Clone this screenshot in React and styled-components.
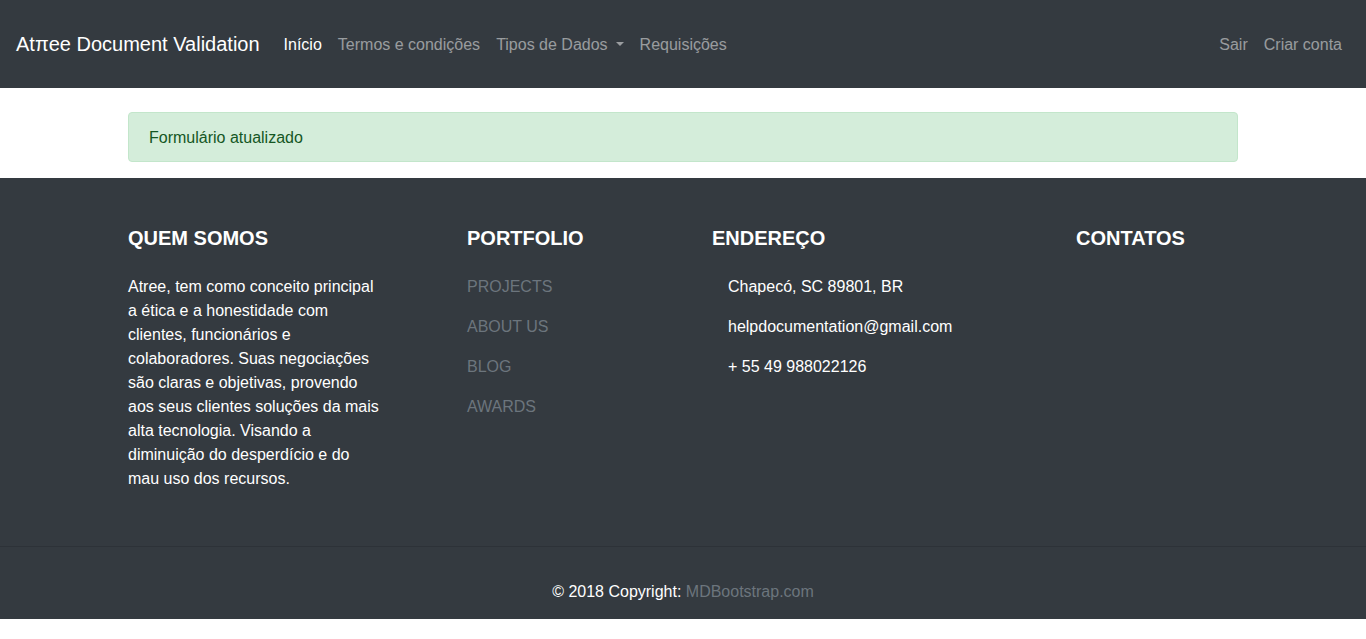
import React from "react";
import styled, { createGlobalStyle } from "styled-components";

const Global = createGlobalStyle`
  * { box-sizing: border-box; }
  body {
    margin: 0;
    background: #fff;
    font-family: "Liberation Sans", Arial, sans-serif;
    font-size: 16px;
    line-height: 1.5;
    color: #212529;
  }
`;

const Navbar = styled.nav`
  display: flex;
  align-items: center;
  height: 88px;
  padding: 0 16px;
  background: #343a40;
`;

const Brand = styled.a`
  font-size: 20px;
  line-height: 30px;
  padding: 5px 0;
  margin-right: 16px;
  color: #fff;
  text-decoration: none;
  white-space: nowrap;
`;

const NavList = styled.ul`
  display: flex;
  list-style: none;
  margin: 0;
  padding: 0;
  margin-left: ${(p) => (p.$right ? "auto" : "0")};
`;

const NavLink = styled.a`
  display: flex;
  align-items: center;
  padding: 9px 8px 7px;
  line-height: 24px;
  color: ${(p) => (p.$active ? "#fff" : "rgba(255,255,255,0.5)")};
  text-decoration: none;
  white-space: nowrap;
`;

const Caret = styled.span`
  display: inline-block;
  margin-left: 8px;
  width: 0;
  height: 0;
  border-top: 4.8px solid currentColor;
  border-left: 4.8px solid transparent;
  border-right: 4.8px solid transparent;
  position: relative;
  top: -1px;
`;

const Main = styled.main`
  width: 1140px;
  margin: 0 auto;
  padding: 24px 15px 16px;
`;

const Alert = styled.div`
  padding: 13px 20px 11px;
  border: 1px solid #c3e6cb;
  border-radius: 4px;
  background: #d4edda;
  color: #155724;
  line-height: 24px;
`;

const Footer = styled.footer`
  background: #343a40;
  color: #fff;
`;

const FooterGrid = styled.div`
  width: 1140px;
  margin: 0 auto;
  padding: 48px 15px 55px;
  display: grid;
  grid-template-columns: 339px 245px 364px 1fr;
`;

const Column = styled.div``;

const Heading = styled.h5`
  margin: 0 0 25px;
  font-size: 20px;
  font-weight: 700;
  line-height: 24px;
  text-transform: uppercase;
`;

const Text = styled.p`
  margin: 0;
  width: 255px;
  line-height: 24px;
`;

const LinkItem = styled.p`
  margin: 0 0 16px;
  line-height: 24px;
`;

const FooterLink = styled.a`
  color: #6c757d;
  text-decoration: none;
  text-transform: uppercase;
`;

const Contact = styled.p`
  margin: 0 0 16px;
  padding-left: 16px;
  line-height: 24px;
`;

const Copyright = styled.div`
  border-top: 1px solid rgba(0, 0, 0, 0.12);
  padding: 33px 0 15px;
  text-align: center;
  line-height: 24px;
`;

const CopyLink = styled.a`
  color: #6c757d;
  text-decoration: none;
`;

export default function App() {
  return (
    <>
      <Global />
      <Navbar>
        <Brand href="#">Atπee Document Validation</Brand>
        <NavList>
          <li><NavLink href="#" $active>Início</NavLink></li>
          <li><NavLink href="#">Termos e condições</NavLink></li>
          <li><NavLink href="#">Tipos de Dados<Caret /></NavLink></li>
          <li><NavLink href="#">Requisições</NavLink></li>
        </NavList>
        <NavList $right>
          <li><NavLink href="#">Sair</NavLink></li>
          <li><NavLink href="#">Criar conta</NavLink></li>
        </NavList>
      </Navbar>
      <Main>
        <Alert>Formulário atualizado</Alert>
      </Main>
      <Footer>
        <FooterGrid>
          <Column>
            <Heading>Quem somos</Heading>
            <Text>
              Atree, tem como conceito principal a ética e a honestidade com
              clientes, funcionários e colaboradores. Suas negociações são
              claras e objetivas, provendo aos seus clientes soluções da mais
              alta tecnologia. Visando a diminuição do desperdício e do mau uso
              dos recursos.
            </Text>
          </Column>
          <Column>
            <Heading>Portfolio</Heading>
            <LinkItem><FooterLink href="#">Projects</FooterLink></LinkItem>
            <LinkItem><FooterLink href="#">About us</FooterLink></LinkItem>
            <LinkItem><FooterLink href="#">Blog</FooterLink></LinkItem>
            <LinkItem><FooterLink href="#">Awards</FooterLink></LinkItem>
          </Column>
          <Column>
            <Heading>Endereço</Heading>
            <Contact>Chapecó, SC 89801, BR</Contact>
            <Contact>helpdocumentation@gmail.com</Contact>
            <Contact>+ 55 49 988022126</Contact>
          </Column>
          <Column>
            <Heading>Contatos</Heading>
          </Column>
        </FooterGrid>
        <Copyright>
          © 2018 Copyright: <CopyLink href="#">MDBootstrap.com</CopyLink>
        </Copyright>
      </Footer>
    </>
  );
}
